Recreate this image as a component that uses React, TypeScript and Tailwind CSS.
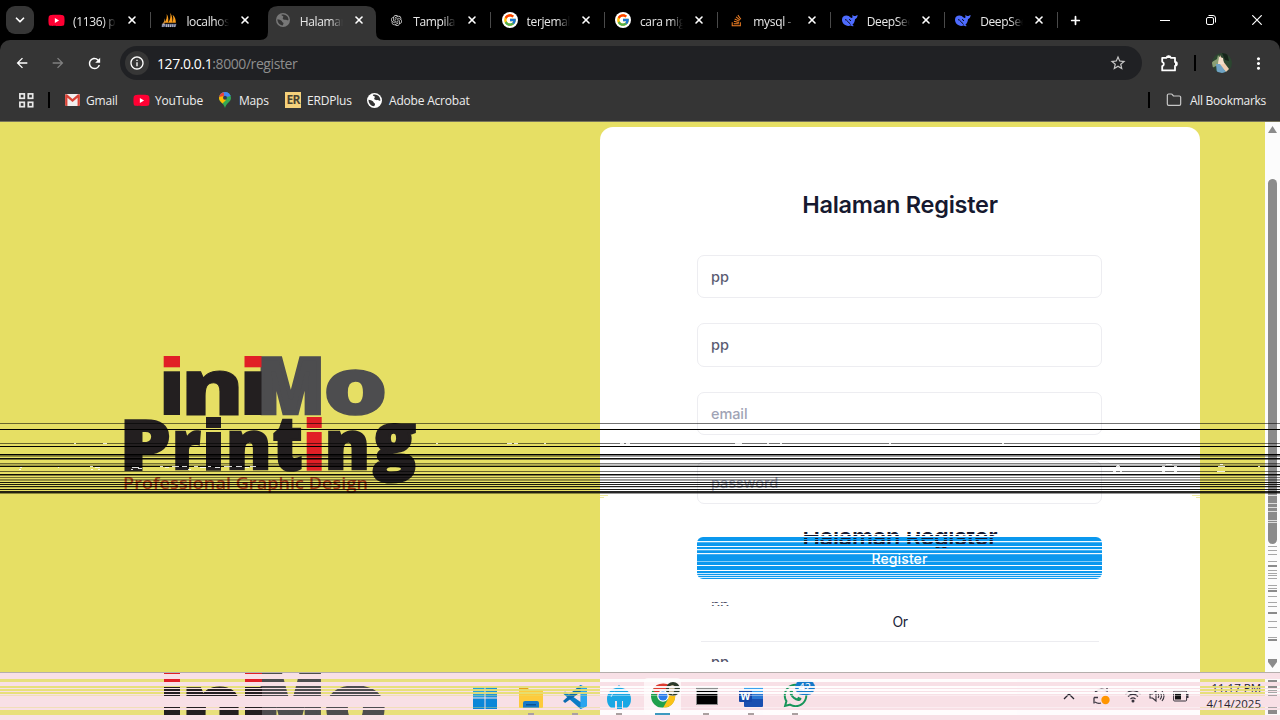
import React, { useMemo } from "react";
import { FaYoutube, FaStackOverflow, FaWhatsapp } from "react-icons/fa";
import { FcGoogle } from "react-icons/fc";
import { SiOpenai } from "react-icons/si";
import {
  MdArrowBack,
  MdArrowForward,
  MdRefresh,
  MdInfoOutline,
  MdStarOutline,
  MdMoreVert,
} from "react-icons/md";
import { ChevronDown, Folder, X, Plus } from "lucide-react";

/* ---------- small drawings ---------- */

const Globe = ({ size, fg, bg }: { size: number; fg: string; bg: string }) => (
  <svg width={size} height={size} viewBox="0 0 16 16">
    <circle cx="8" cy="8" r="8" fill={fg} />
    <path
      d="M1.6 7.2c2 .2 3.600.9 4.600 1.600 1 .8.5 1.600 1.800 2 1 .4.6 1.800-.4 3.400C4 14 1.600 11 1.600 7.200zM6.200 2c2.600-.9 5.800.2 7.200 2.600.6 1.400.9 2.400.9 3.400-1.600.9-2 -.6-3.600-.4-1.400 0-2.800-.2-3-1.400-.2-1 1-1.200.6-2.200C8 3 6.400 3.400 6.200 2z"
      fill={bg}
    />
  </svg>
);

const Youtube = () => (
  <span className="relative flex h-4 w-4 items-center justify-center">
    <span className="h-2 w-2 bg-white" />
    <FaYoutube className="absolute h-[17px] w-[17px] text-[#ff0033]" />
  </span>
);

const Sails = () => (
  <svg width="17" height="17" viewBox="0 0 17 17">
    <path d="M3.500 11C6 8 6.500 4.500 6 1.500 8 4 8 8 7.500 11zM7.500 11C10 8 10.500 4 9.800.3 12 3.500 12.500 7.500 12 11zM12 11c1.500-3 1.200-6.500.3-8.500 2.500 2 3.500 5 3.500 8.500z" fill="#f89c1c" />
    <path d="M.8 12.500c2-1.500 3-4 3.200-6.500.8 2 .6 4-.2 6z" fill="#c98a3a" />
    <path d="M1 12h15.500L15.500 15.500H.5z" fill="#4f5675" />
    <path d="M2 15.500v-3h1.500v1.500M6 12.500v3M8 12.500v3M10.500 12.500l-.5 3M12.500 12.500v3M15 12.500l-.5 3" stroke="#cfcfd6" strokeWidth=".9" fill="none" />
  </svg>
);

const Whale = () => (
  <svg width="16" height="13" viewBox="0 0 16 13">
    <path
      d="M0 5.800C0 3 2 1.600 4.400 1.600c1.800 0 3 .8 4.200 2 .8.7 1.500.6 1.800-.1.200-.9-.2-1.700.2-2.700.5.9 1.200 1.200 2 1.200 1 .1 1.700-.6 3-1-.1 2-1 3.700-2.600 4.200-.2 2.500-1.200 4.400-2.600 5.600l1.200.9-.3.500c-1 .1-1.800-.2-2.600-.7C4 13 0 9.800 0 5.800z"
      fill="#4d6bfe"
    />
    <path d="M3 5.600c2-.1 3.500 3.200 5.600 4.800M7 5.400c1 .1 1.600.8 1.800 1.600" stroke="#000" strokeWidth=".9" fill="none" />
  </svg>
);

const Puzzle = () => (
  <svg width="17" height="18" viewBox="0 0 17 18" fill="none" stroke="#fff" strokeWidth="1.800" strokeLinejoin="round">
    <path d="M1.200 3.800H5.500a2.200 2 0 0 1 4.300 0H14V8a1.800 1.800 0 0 1 0 3.800V16.400H1.200V12.200a2.300 2.300 0 0 0 0-4.400z" />
    <path d="M6 3.500a1.700 1.800 0 0 1 3.300 0zM14.500 8.500a1.500 1.500 0 0 1 0 2.800z" fill="#fff" strokeWidth="1" />
  </svg>
);

const Gmail = () => (
  <svg width="15" height="12" viewBox="0 0 16 13">
    <rect width="16" height="13" rx="1.500" fill="#f1eeee" />
    <path d="M0 1.500v10Q0 13 1.500 13H2.500V4L8 8.600 13.500 4v9h1Q16 13 16 11.500v-10Q15.500 0 14 .3L8 5.400 2 .3Q.5 0 0 1.500z" fill="#d94236" />
  </svg>
);

const MapPin = () => (
  <svg width="12" height="16" viewBox="0 0 12 16">
    <clipPath id="pin">
      <path d="M6 0a6 6 0 0 1 6 6c0 3.600-4.600 5-6 10C4.600 11 0 9.600 0 6a6 6 0 0 1 6-6z" />
    </clipPath>
    <g clipPath="url(#pin)">
      <rect width="12" height="16" fill="#34a853" />
      <path d="M0 0h12L5 8 0 3z" fill="#4285f4" />
      <path d="M0 0h6L4 6 0 5z" fill="#ea4335" />
      <path d="M0 5l5-1 2 4-5 5-3-3z" fill="#fbbc04" />
      <path d="M4 0h8v4L7 5z" fill="#4285f4" />
    </g>
    <circle cx="6" cy="5.800" r="2" fill="#2c3b52" />
  </svg>
);

const Avatar = () => (
  <svg width="20" height="20" viewBox="0 0 20 20">
    <clipPath id="av"><circle cx="10" cy="10" r="10" /></clipPath>
    <g clipPath="url(#av)">
      <rect width="20" height="20" fill="#2c4630" />
      <path d="M0 9l5-3 1-4 3 4-3 6-6 3z" fill="#8ba075" />
      <path d="M8 2l3 6 6 8-3 3-8-8z" fill="#f0cdb0" />
      <path d="M7 4l4 1 1 6-6 1z" fill="#f4dfca" />
      <path d="M4 11l4 0 6 8-4 2H5z" fill="#6fa3c4" />
      <path d="M10 0h5l2 8-4-1z" fill="#16241a" />
    </g>
  </svg>
);

const tabs = [
  { label: "(1136) p", icon: <Youtube /> },
  { label: "localhost", icon: <Sails /> },
  { label: "Halaman", icon: <Globe size={14} fg="#777" bg="#353535" />, active: true },
  { label: "Tampilan", icon: <SiOpenai className="h-[11px] w-[11px] text-[#d8d8d8]" /> },
  { label: "terjemah", icon: "g" },
  { label: "cara migr", icon: "g" },
  { label: "mysql -", icon: <FaStackOverflow className="h-[13px] w-[13px] text-[#f48024]" /> },
  { label: "DeepSeek", icon: <Whale /> },
  { label: "DeepSeek", icon: <Whale /> },
];

function TabStrip() {
  return (
    <div className="flex h-10 bg-black">
      <div className="flex w-[38px] shrink-0 items-center pl-1.5">
        <div className="flex h-7 w-7 items-center justify-center rounded-[9px] bg-[#363636]">
          <ChevronDown className="h-3.5 w-3.5 text-white" strokeWidth={3} />
        </div>
      </div>
      {tabs.map((t, i) => (
        <div key={i} className="relative flex h-10 w-[113.4px] shrink-0 items-center">
          {t.active && (
            <svg className="absolute bottom-0 left-[-5px]" width="124" height="34" viewBox="0 0 124 34">
              <path d="M0 34Q8 34 8 26V10Q8 0 18 0H106Q116 0 116 10V26Q116 34 124 34Z" fill="#353535" />
            </svg>
          )}
          <div className="relative flex h-4 w-[26px] shrink-0 items-center justify-center pl-2.5">
            {t.icon === "g" ? (
              <span className="flex h-4 w-4 shrink-0 items-center justify-center rounded-full bg-white">
                <FcGoogle className="h-3.5 w-3.5" />
              </span>
            ) : (
              t.icon
            )}
          </div>
          <div className="relative ml-[9px] mt-[3px] w-[43px] shrink-0 overflow-hidden whitespace-nowrap text-[12px] tracking-[-0.35px] text-[#e8e8e8] [mask-image:linear-gradient(to_right,black_70%,transparent)]">
            {t.label}
          </div>
          <X className="relative ml-[10px] h-3 w-3 shrink-0 text-white" strokeWidth={3.2} />
          {i !== 1 && i !== 2 && <span className="ml-[12px] h-4 w-px shrink-0 bg-[#4a4a4a]" />}
        </div>
      ))}
      <div className="flex w-[33px] items-center justify-center">
        <Plus className="h-[13px] w-[13px] text-white" strokeWidth={3.2} />
      </div>
      <div className="ml-auto flex items-center gap-9 pr-[18px]">
        <span className="h-px w-2.5 bg-white" />
        <svg width="10" height="10" viewBox="0 0 10 10" fill="none" stroke="#fff">
          <rect x=".5" y="2.500" width="7" height="7" rx="1.500" />
          <path d="M2.500.5H7Q9.500.5 9.500 3V7.500" />
        </svg>
        <svg width="10" height="10" viewBox="0 0 10 10" stroke="#fff" strokeWidth="1.200">
          <path d="M.3.3l9.400 9.400M9.700.3L.3 9.700" />
        </svg>
      </div>
    </div>
  );
}

function Toolbar() {
  return (
    <div className="bg-black">
      <div className="flex h-[81px] flex-col rounded-t-[10px] bg-[#353535]">
        <div className="flex h-[46px] items-center">
          <div className="flex w-[120px] items-center gap-5 pl-3.5">
            <MdArrowBack className="h-4 w-4 text-white" />
            <MdArrowForward className="h-4 w-4 text-[#808080]" />
            <MdRefresh className="h-[17px] w-[17px] text-white" />
          </div>
          <div className="flex h-[34px] w-[1022px] items-center rounded-full bg-[#202124]">
            <div className="ml-[5px] flex h-6 w-6 items-center justify-center rounded-full bg-[#363636]">
              <MdInfoOutline className="h-4 w-4 text-white" />
            </div>
            <div className="ml-2 text-[14px] tracking-[-0.42px] text-[#8e8e8e]">
              <span className="text-white">127.0.0.1</span>:8000/register
            </div>
            <MdStarOutline className="ml-auto mr-[15px] h-[18px] w-[18px] text-[#c7c7c7]" />
          </div>
          <span className="ml-[19px]"><Puzzle /></span>
          <span className="ml-[16px] h-4 w-[2px] bg-black" />
          <span className="ml-4"><Avatar /></span>
          <MdMoreVert className="ml-[17px] h-[19px] w-[19px] text-white" />
        </div>
        <div className="flex h-7 items-center text-[12px] tracking-[-0.2px] text-[#ededed]">
          <svg className="ml-[19px]" width="15" height="15" viewBox="0 0 15 15" fill="none" stroke="#e8e8e8" strokeWidth="1.700">
            <rect x=".9" y=".9" width="4.400" height="4.400" />
            <rect x="9.300" y=".9" width="4.400" height="4.400" />
            <rect x=".9" y="9.300" width="4.400" height="4.400" />
            <rect x="9.300" y="9.300" width="4.400" height="4.400" />
          </svg>
          <span className="ml-[14px] h-4 w-[2px] bg-black" />
          <div className="ml-[15px] flex w-[68px] items-center gap-[6px]"><Gmail /><span className="pt-px">Gmail</span></div>
          <div className="flex w-[86px] items-center gap-[6px]"><Youtube /><span className="pt-px">YouTube</span></div>
          <div className="flex w-[66px] items-center gap-[8px]"><MapPin /><span className="pt-px">Maps</span></div>
          <div className="flex w-[82px] items-center gap-[6px]">
            <span className="flex h-4 w-4 items-center justify-center overflow-hidden bg-[#f6d27c] text-[12px] font-bold tracking-[-0.8px] text-[#4a4232]">ER</span>
            <span className="pt-px">ERDPlus</span>
          </div>
          <div className="flex items-center gap-[7px]"><Globe size={15} fg="#fff" bg="#353535" /><span className="pt-px">Adobe Acrobat</span></div>
          <span className="ml-auto h-4 w-[2px] bg-black" />
          <Folder className="ml-4 h-4 w-4 text-[#c7c7c7]" strokeWidth={1.800} />
          <span className="ml-2 mr-[14px] pt-px tracking-[-0.3px]">All Bookmarks</span>
        </div>
      </div>
      <div className="h-px bg-[#77745c]" />
    </div>
  );
}

/* ---------- brand logo ---------- */

/* s is the extra outline, in page pixels, that thickens a letter */
type Box = { c: string; x0: number; x1: number; y0: number; y1: number; fill: string; s?: number };

const dark = "#231f20";
const letters: Box[] = [
  { c: "i", x0: 163.7, x1: 180, y0: 356, y1: 415, fill: "none" },
  { c: "n", x0: 186, x1: 239, y0: 370, y1: 415, fill: dark, s: 1 },
  { c: "i", x0: 244.5, x1: 261.5, y0: 356, y1: 415, fill: "none" },
  { c: "M", x0: 260, x1: 321.7, y0: 356, y1: 415, fill: "#4d4d4f", s: 4.200 },
  { c: "o", x0: 326, x1: 385, y0: 370, y1: 415.7, fill: "#4d4d4f", s: 1.500 },
  { c: "P", x0: 124, x1: 169.500, y0: 419, y1: 470.7, fill: dark, s: 2 },
  { c: "r", x0: 174.7, x1: 201, y0: 431, y1: 470.7, fill: dark, s: 2.500 },
  { c: "i", x0: 206, x1: 221, y0: 417, y1: 470.7, fill: "none" },
  { c: "n", x0: 229, x1: 268.500, y0: 431, y1: 470.7, fill: dark, s: 2.500 },
  { c: "t", x0: 272.7, x1: 301.7, y0: 419, y1: 471.500, fill: dark, s: 2.500 },
  { c: "i", x0: 306.7, x1: 321.7, y0: 417, y1: 470.7, fill: "none" },
  { c: "n", x0: 327.7, x1: 367, y0: 431, y1: 470.7, fill: dark, s: 2.500 },
  { c: "g", x0: 371.7, x1: 416, y0: 423, y1: 484, fill: dark, s: 3 },
];

const stems = [
  { x: 163.7, w: 16.300, top: 356, dot: 11.300, stem: 371.300, end: 415, a: "#e11f26", b: dark },
  { x: 244.5, w: 17, top: 356, dot: 11.300, stem: 371.300, end: 415, a: "#e11f26", b: dark },
  { x: 206, w: 15, top: 417, dot: 11, stem: 432, end: 470.7, a: dark, b: dark },
  { x: 306.7, w: 15, top: 417, dot: 11, stem: 432, end: 470.7, a: "#e11f26", b: "#e11f26" },
];

function Logo() {
  const placed = useMemo(() => {
    const ctx = document.createElement("canvas").getContext("2d")!;
    ctx.font = '800 100px "Open Sans"';
    return letters.map((l) => {
      const m = ctx.measureText(l.c);
      const s = l.s ?? 0;
      const left = -m.actualBoundingBoxLeft;
      const sx = (l.x1 - l.x0 - s) / (m.actualBoundingBoxRight - left);
      const sy = (l.y1 - l.y0 - s) / (m.actualBoundingBoxAscent + m.actualBoundingBoxDescent);
      const tx = l.x0 + s / 2 - left * sx;
      const ty = l.y1 - s / 2 - m.actualBoundingBoxDescent * sy;
      return { ...l, w: s / ((sx + sy) / 2), t: `translate(${tx} ${ty}) scale(${sx} ${sy})` };
    });
  }, []);
  return (
    <g>
      {placed.map((l, i) => (
        <text key={i} transform={l.t} fontFamily="Open Sans" fontWeight="800" fontSize="100" fill={l.fill} stroke={l.fill} strokeWidth={l.w} strokeLinejoin="miter">
          {l.c}
        </text>
      ))}
      {stems.map((s, i) => (
        <g key={i}>
          <rect x={s.x} y={s.top} width={s.w} height={s.dot} fill={s.a} />
          <rect x={s.x} y={s.stem} width={s.w} height={s.end - s.stem} fill={s.b} />
        </g>
      ))}
    </g>
  );
}

/* ---------- register page ---------- */

function Field({ value, placeholder }: { value?: string; placeholder?: string }) {
  return (
    <div className="flex h-[43.4px] shrink-0 items-center rounded-[7px] border border-[#ededf1] px-[13px] text-[14.500px] font-[450]">
      {value ? <span className="text-[#5b5c72]">{value}</span> : <span className="tracking-[-0.1px] text-[#a0a3b5]">{placeholder}</span>}
    </div>
  );
}

function RegisterPage() {
  return (
    <div className="flex h-[550px] bg-[#e6df64]">
      <div className="w-[600px] shrink-0">
        <svg width="600" height="550" viewBox="0 122 600 550">
          <Logo />
          <text x="123" y="489" fontFamily="Open Sans" fontWeight="600" fontSize="17" fill="#b5481c" textLength="245" lengthAdjust="spacingAndGlyphs">
            Professional Graphic Design
          </text>
        </svg>
      </div>
      <div className="mt-[5px] flex w-[600px] shrink-0 flex-col rounded-t-[13px] bg-white px-[97px] font-['Inter',sans-serif]">
        <h1 className="mt-[62px] h-8 text-center text-[23.500px] font-semibold leading-8 tracking-[-0.25px] text-[#16192f]">Halaman Register</h1>
        <div className="mt-[33.7px] flex flex-col gap-[25.300px] pr-px">
          <Field value="pp" />
          <Field value="pp" />
          <Field placeholder="email" />
          <Field placeholder="password" />
        </div>
        <div className="mr-px mt-[33.300px] flex h-[42px] shrink-0 items-center justify-center rounded-md bg-[#0b98ee] text-[14px] font-medium tracking-[0.100px] text-white">
          Register
        </div>
        <div className="mt-[32.500px] text-center text-[14px] leading-5 tracking-[-0.5px] text-[#20233a]">Or</div>
        <div className="ml-1 mr-1 mt-[9px] h-px bg-[#ececf0]" />
      </div>
      <div className="w-[65px] shrink-0" />
      <div className="flex w-[15px] shrink-0 flex-col items-center bg-[#fcfcfc]">
        <svg width="9" height="7" viewBox="0 0 9 7" className="mt-1"><path d="M4.500 0L9 7H0z" fill="#8b8b8b" /></svg>
        <div className="mt-[46px] h-[365px] w-[9px] rounded-full bg-[#8b8b8b]" />
        <svg width="9" height="6" viewBox="0 0 9 6" className="mt-[118px]"><path d="M0 0h9L4.500 6z" fill="#8b8b8b" /></svg>
      </div>
    </div>
  );
}

/* ---------- taskbar ---------- */

const WindowsIcon = () => (
  <svg width="24" height="22" viewBox="0 0 24 22" fill="#0b86d8">
    <rect width="11.500" height="10.500" fill="#26a0e0" /><rect x="12.500" width="11.500" height="10.500" fill="#1c94dc" />
    <rect y="11.500" width="11.500" height="10.500" /><rect x="12.500" y="11.500" width="11.500" height="10.500" />
  </svg>
);
const FolderIcon = () => (
  <svg width="24" height="20" viewBox="0 0 24 20">
    <path d="M0 0h9l2 3h13v16H0z" fill="#e5a11a" /><rect y="2" width="24" height="18" rx="1" fill="#fdcb3c" />
    <path d="M4 20v-5q0-2 2-2h12q2 0 2 2v5z" fill="#1679c8" /><rect x="7" y="16" width="10" height="1.500" fill="#0b5290" />
  </svg>
);
const CodeIcon = () => (
  <svg width="24" height="24" viewBox="0 0 24 24">
    <path d="M17.500 0L24 3v18l-6.500 3L0 8.500 2 6.500l4 3z" fill="#0b7dc6" />
    <path d="M17.500 0v24L24 21V3z" fill="#2aa5ee" />
    <path d="M17.500 7v10L10.500 12z" fill="#f8e0e6" />
    <path d="M17.500 0v7L2 18 0 16z" fill="#0b6cb0" />
  </svg>
);
const DropIcon = () => (
  <svg width="24" height="24" viewBox="0 0 24 24">
    <path d="M12 0l3 3c5 1 9 5 9 11q0 6-4 9h-4v-7h-1v8h-5v-8H8v7H4Q0 20 0 14C0 8 4 4 9 3z" fill="#1aa7e4" />
    <path d="M4 12q1-4 4-5" stroke="#b6e6fa" fill="none" />
  </svg>
);
const ChromeIcon = () => (
  <svg width="29" height="28" viewBox="0 0 29 28">
    <circle cx="12" cy="15" r="12" fill="#1fa04c" />
    <path d="M1.500 9A12 12 0 0 1 23 9.500H12L7 15z" fill="#dd3b30" />
    <path d="M23 9.500A12 12 0 0 1 12 27l5-9-1-8.500z" fill="#fbc116" />
    <circle cx="12" cy="15" r="5.800" fill="#fff" /><circle cx="12" cy="15" r="4.600" fill="#2b7de9" />
    <circle cx="22" cy="8" r="7" fill="#2c3a2a" /><path d="M18 6q4-4 6 0l-2 8-4-3z" fill="#c9b69c" />
  </svg>
);
const TerminalIcon = () => (
  <svg width="22" height="18" viewBox="0 0 22 18"><rect width="22" height="18" fill="#8c8c8c" /><rect x="1" y="2" width="20" height="15" fill="#000" /></svg>
);
const WordIcon = () => (
  <svg width="24" height="20" viewBox="0 0 24 20">
    <rect x="5" width="19" height="20" rx="1" fill="#1a4fb0" /><rect x="5" width="19" height="7" fill="#3aa0ee" /><rect x="5" y="6" width="19" height="6" fill="#2a76d2" />
    <rect y="3" width="13" height="12" rx="1" fill="#1547a8" />
    <text x="1.500" y="12.500" fontSize="10" fontWeight="700" fontFamily="Open Sans" fill="#fff">W</text>
  </svg>
);
const WhatsappIcon = () => (
  <span className="relative flex">
    <FaWhatsapp className="h-[27px] w-[27px] text-[#17955a]" />
    <span className="absolute -right-1.5 -top-0.5 flex h-[15px] w-[20px] items-center justify-center rounded-full bg-[#1479c9] text-[11px] text-white">42</span>
  </span>
);

const apps = [
  { el: <WindowsIcon />, cls: "pt-[14px]" },
  { el: <FolderIcon />, cls: "pt-[15px] pl-[3px]" },
  { el: <CodeIcon />, cls: "pt-[12px] pl-[2px]" },
  { el: <DropIcon />, cls: "pt-[12px] pl-[2px]" },
  { el: <ChromeIcon />, cls: "pt-[8px] pl-[6px]" },
  { el: <TerminalIcon />, cls: "pt-[14px]" },
  { el: <WordIcon />, cls: "pt-[14px]" },
  { el: <WhatsappIcon />, cls: "pt-[9px]" },
];

/* rows in which the page bleeds through the taskbar: [top, height] */
const bleed: [number, number][] = [
  [679, 3], [686, 2], [689, 2], [692, 2], [695, 1], [707, 1], [710, 5],
];

function Taskbar() {
  return (
    <div className="flex h-12 border-t border-[#b5aeac] bg-[#f8e0e6] pl-[463px] text-[#252330]">
      {apps.map((a, i) => (
        <div key={i} className={`flex w-[44.3px] shrink-0 justify-center ${a.cls} ${i === 4 ? "relative" : ""}`}>
          {i === 4 && <span className="absolute left-[4px] top-[5px] h-[36px] w-[37px] rounded bg-[#fdf4f6]" />}
          <span className="relative">{a.el}</span>
        </div>
      ))}
      <div className="ml-auto flex h-full items-start pr-[19px] pt-[16px]">
        <svg width="12" height="7" viewBox="0 0 12 7" className="mr-[18px] mt-[4px]" fill="none" stroke="#25222c" strokeWidth="1.300">
          <path d="M1 6l5-5 5 5" />
        </svg>
        <svg width="18" height="18" viewBox="0 0 18 18" className="mr-[14px] -mt-px">
          <path d="M2 4q6-5 12-1V0M1 9.500h4M1 9.500v6M2 14q3 2 6 1" stroke="#3a3640" strokeWidth="1.300" fill="none" />
          <circle cx="12.500" cy="12" r="4.200" fill="#ff9500" />
        </svg>
        <svg width="16" height="14" viewBox="0 0 16 14" className="mr-[8px]" fill="none" stroke="#34303a" strokeWidth="1.200">
          <path d="M.5 5q7.500-7 15 0M3 7.500q5-4.500 10 0M5.500 10q2.500-2.200 5 0" /><circle cx="8" cy="12" r=".9" fill="#34303a" />
        </svg>
        <svg width="16" height="14" viewBox="0 0 16 14" className="mr-[8px]" fill="none" stroke="#34303a" strokeWidth="1.100">
          <path d="M1 5v4h2.500l3.500 3V2L3.500 5zM9 5q1.500 2 0 4M11 3.500q3 3.500 0 7M13 2q4 5 0 10" />
        </svg>
        <svg width="16" height="12" viewBox="0 0 16 12" className="mr-[16px] mt-px">
          <rect x=".6" y="1" width="13" height="10" rx="1" fill="none" stroke="#34303a" /><rect x="2" y="2.500" width="6" height="7" fill="#111" /><path d="M14 4h1.500v4H14z" fill="#34303a" />
        </svg>
        <div className="-mt-[9px] w-[56px] whitespace-nowrap text-right text-[11.500px] leading-4">
          <div>11:17 PM</div>
          <div>4/14/2025</div>
        </div>
      </div>
    </div>
  );
}

/* ---------- display tearing ---------- */

/* [top, height, opacity] */
const tears: [number, number, number][] = [
  [423, 1, 0.55], [429, 1, 1], [443, 1, 0.55], [446, 1, 1], [454, 1, 1], [455, 1, 0.5], [456, 1, 0.35],
  [458, 1, 0.95], [459, 1, 0.5], [463, 1, 0.5], [464, 1, 0.2], [465, 1, 0.3], [466, 1, 0.95], [471, 1, 0.55], [474, 1, 0.95],
  [475, 1, 0.45], [477, 1, 0.5], [479, 1, 0.4], [480, 1, 0.35], [482, 1, 0.9], [484, 1, 0.88], [486, 1, 0.88],
  [487, 1, 0.2], [489, 1, 0.9], [491, 2, 0.85], [493, 1, 0.4],
];
const buttonTears: [number, number, number][] = [
  [541, 1, 0.95], [542, 1, 0.25], [546, 1, 0.95], [549, 1, 0.9], [550, 1, 0.25], [553, 1, 0.95], [554, 1, 0.2], [561, 1, 0.5], [565, 1, 1], [570, 1, 1], [573, 1, 0.8], [575, 1, 0.8], [577, 1, 0.85],
];
/* [x, y, width] */
const flecks: [number, number, number][] = [
  [20, 467, 2], [19, 469, 2], [58, 467, 1], [90, 466, 3], [95, 467, 5], [91, 469, 2], [98, 469, 2], [132, 467, 7], [131, 469, 2],
  [138, 468, 4], [160, 466, 3], [165, 467, 4], [172, 466, 7], [182, 466, 5], [188, 469, 3], [194, 466, 4], [200, 467, 6], [208, 466, 3],
  [215, 467, 5], [224, 466, 8], [236, 466, 6], [245, 467, 4], [250, 466, 6], [74, 443, 2], [103, 443, 4], [436, 443, 2], [507, 443, 5],
  [514, 443, 4], [544, 443, 2], [620, 443, 4], [626, 443, 4], [735, 443, 7], [767, 443, 2], [780, 443, 2], [889, 443, 2], [1002, 443, 2],
  [1117, 465, 2], [1116, 466, 4], [1115, 468, 2], [1120, 468, 2], [1113, 471, 3], [1120, 471, 2], [1166, 464, 6], [1162, 466, 3], [1174, 466, 3],
  [1162, 471, 3], [1174, 471, 3], [1220, 464, 3], [1218, 466, 7], [1217, 471, 8], [1258, 466, 2],
];
/* [top, height] */
const scrollGaps: [number, number][] = [[495, 1], [503, 1], [507, 1], [511, 1], [520, 1], [522, 1]];
const scrollDashes: [number, number][] = [
  [546, 1], [550, 1], [554, 1], [561, 1], [565, 2], [570, 1], [573, 1], [575, 1], [578, 1], [585, 1], [588, 1], [590, 2], [596, 1], [602, 1],
  [606, 1], [612, 2], [621, 1], [627, 1], [637, 1], [639, 2], [659, 3], [680, 2], [686, 2], [690, 1], [692, 1], [695, 1], [707, 1], [710, 4],
];

function Tearing() {
  return (
    <svg className="pointer-events-none absolute left-0 top-0" width="1280" height="720" shapeRendering="crispEdges">
      <clipPath id="rows"><path d={[...bleed, [673, 1] as [number, number]].map(([y, h]) => `M0 ${y}H1280V${y + h}H0Z`).join("")} /></clipPath>
      <clipPath id="titleRows"><path d="M700 532h400v2H700zM700 535h400v1H700zM700 538h400v1H700zM700 540h400v1H700zM700 542h400v2H700zM700 547h400v1H700z" /></clipPath>
      <clipPath id="valueRows"><path d="M700 602h60v1h-60zM700 605h60v1h-60zM700 657h60v5h-60z" /></clipPath>
      {tears.map(([y, h, o]) => <rect key={y} x="0" y={y} width="1280" height={h} fill="#000" opacity={o} />)}
      {flecks.map(([x, y, w], i) => <rect key={i} x={x} y={y} width={w} height="1" fill="#fff" opacity=".85" />)}
      {buttonTears.map(([y, h, o]) => <rect key={y} x="697" y={y} width="405" height={h} fill="#fff" opacity={o} />)}
      <path d="M600 495.500h8M600 497.500h4M1192 495.500h8M1196 497.500h4" stroke="#efeaa0" strokeWidth="1" />
      <g clipPath="url(#titleRows)" fill="#16192f">
        <text x="900" y="545" textAnchor="middle" fontFamily="Inter" fontWeight="600" fontSize="23.500" textLength="195">Halaman Register</text>
      </g>
      <g clipPath="url(#valueRows)" fill="#55566b" fontFamily="Inter" fontSize="14.500" fontWeight="500">
        <text x="711" y="610">pp</text>
        <text x="711" y="667">pp</text>
      </g>
      {bleed.map(([y, h]) => (
        <g key={y} opacity={h === 1 ? 0.4 : 0.92}>
          <rect x="0" y={y} width="600" height={h} fill="#e6df72" />
          <rect x="600" y={y} width="600" height={h} fill="#fff" />
          <rect x="1200" y={y} width="65" height={h} fill="#e6df72" />
          <rect x="1265" y={y} width="15" height={h} fill="#fcfcfc" />
        </g>
      ))}
      <g clipPath="url(#rows)"><g transform="translate(0 316)"><Logo /></g></g>
      {scrollGaps.map(([y, h]) => <rect key={y} x="1268" y={y} width="9" height={h} fill="#ddd" />)}
      {scrollDashes.map(([y, h]) => <rect key={y} x="1268" y={y} width="9" height={h} fill="#8b8b8b" opacity={h === 1 ? 0.75 : 1} />)}
      {[531, 575, 619, 706, 751, 795].map((x) => <rect key={x} x={x - 3} y="713" width="6" height="2" rx="1" fill="#aaa0a0" />)}
      <rect x="655" y="713" width="15" height="2" fill="#3d9ac0" />
    </svg>
  );
}

export default function App() {
  return (
    <div className="relative flex h-[720px] w-[1280px] flex-col overflow-hidden bg-black font-['Open_Sans','Noto_Sans',sans-serif]">
      <TabStrip />
      <Toolbar />
      <RegisterPage />
      <Taskbar />
      <Tearing />
    </div>
  );
}
